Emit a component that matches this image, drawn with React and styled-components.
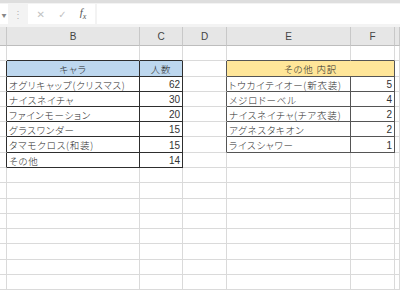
import React from "react";
import styled, { createGlobalStyle } from "styled-components";

const GlobalStyle = createGlobalStyle`
  body {
    margin: 0;
    background: #fff;
    font-family: "Noto Sans CJK JP", sans-serif;
    overflow: hidden;
  }
`;

const Window = styled.div`
  width: 400px;
  height: 290px;
  overflow: hidden;
  display: flex;
  flex-direction: column;
  background: #fff;
`;

const FormulaBar = styled.div`
  height: 27px;
  flex-shrink: 0;
  box-sizing: border-box;
  border-top: 3px solid #dedede;
  background: #f3f3f3;
  padding-top: 1px;
  display: flex;
  align-items: flex-start;
`;

const NameBox = styled.div`
  width: 8px;
  height: 20px;
  background: #fff;
  display: flex;
  align-items: center;
  justify-content: center;
  color: #888;
  font-size: 5px;
`;

const Dots = styled.div`
  width: 20px;
  height: 20px;
  display: flex;
  align-items: center;
  justify-content: center;
  color: #b5b5b5;
  font-family: "Liberation Sans", sans-serif;
  font-size: 10px;
`;

const FnBox = styled.div`
  width: 67px;
  height: 20px;
  box-sizing: border-box;
  background: #fff;
  display: flex;
  align-items: center;
  justify-content: space-around;
  padding: 0 2px;
`;

const FnIcon = styled.span`
  color: ${(p) => (p.$dim ? "#c2c2c2" : "#555")};
  font-family: ${(p) => (p.$fx ? '"Liberation Serif", serif' : '"DejaVu Sans", sans-serif')};
  font-style: ${(p) => (p.$fx ? "italic" : "normal")};
  font-size: ${(p) => (p.$fx ? "11px" : "10px")};
`;

const Input = styled.div`
  flex: 1;
  height: 20px;
  margin-left: 2px;
  background: #fff;
`;

const Sheet = styled.div`
  display: grid;
  grid-template-columns: 7px 133px 43px 44px 124px 44px 1fr;
`;

const ColHead = styled.div`
  height: 19px;
  box-sizing: border-box;
  background: #e6e6e6;
  border-right: 1px solid #c8c8c8;
  border-bottom: 1px solid #bdbdbd;
  display: flex;
  align-items: center;
  justify-content: center;
  color: #444;
  font-family: "Liberation Sans", sans-serif;
  font-size: 10px;
`;

const Cell = styled.div`
  height: ${(p) => p.$h}px;
  box-sizing: border-box;
  grid-column: span ${(p) => p.$span || 1};
  background: ${(p) => p.$bg || "#fff"};
  border-right: 1px solid ${(p) => p.$right || "#dadada"};
  border-bottom: 1px solid ${(p) => p.$bottom || "#dadada"};
  display: flex;
  align-items: center;
  justify-content: ${(p) =>
    p.$align === "center" ? "center" : p.$align === "right" ? "flex-end" : "flex-start"};
  padding: 1px 2px 0 2px;
  color: #2a2a2a;
  font-size: 9.5px;
  font-weight: 300;
  font-feature-settings: "palt";
  letter-spacing: 0.8px;
  white-space: nowrap;
`;

const Num = styled.span`
  font-family: "Liberation Sans", sans-serif;
  font-size: 10px;
  font-weight: 400;
  color: #333;
  letter-spacing: 0;
`;

const HEIGHTS = [15, 16, 15, 15, 15, 15, 16, 15, 15, 16, 15, 15, 15, 16, 15, 15];
const LETTERS = ["", "B", "C", "D", "E", "F", ""];

const DARK1 = "#2e2e2e";
const DARK2 = "#555";

const chara = [
  ["オグリキャップ(クリスマス)", 62],
  ["ナイスネイチャ", 30],
  ["ファインモーション", 20],
  ["グラスワンダー", 15],
  ["タマモクロス(和装)", 15],
  ["その他", 14],
];

const others = [
  ["トウカイテイオー(新衣装)", 5],
  ["メジロドーベル", 4],
  ["ナイスネイチャ(チア衣装)", 2],
  ["アグネスタキオン", 2],
  ["ライスシャワー", 1],
];

function buildRow(r) {
  // r: 1-based row number
  const cells = [];
  const inT1 = r >= 2 && r <= 8;
  const inT2 = r >= 2 && r <= 7;
  const above = r === 1;

  cells.push({ right: inT1 ? DARK1 : null });

  // B, C
  if (r === 2) {
    cells.push({ text: "キャラ", align: "center", bg: "#bdd7ee", right: DARK1, bottom: DARK1 });
    cells.push({ text: "人数", align: "center", bg: "#bdd7ee", right: DARK1, bottom: DARK1 });
  } else if (inT1) {
    const [name, n] = chara[r - 3];
    cells.push({ text: name, right: DARK1, bottom: DARK1 });
    cells.push({ num: n, align: "right", right: DARK1, bottom: DARK1 });
  } else {
    cells.push({ bottom: above ? DARK1 : null });
    cells.push({ bottom: above ? DARK1 : null });
  }

  // D
  cells.push({ right: inT2 ? DARK2 : null });

  // E, F
  if (r === 2) {
    cells.push({ text: "その他 内訳", align: "center", bg: "#ffe699", span: 2, right: DARK2, bottom: DARK2 });
  } else if (inT2) {
    const [name, n] = others[r - 3];
    cells.push({ text: name, right: DARK2, bottom: DARK2 });
    cells.push({ num: n, align: "right", right: DARK2, bottom: DARK2 });
  } else {
    cells.push({ bottom: above ? DARK2 : null });
    cells.push({ bottom: above ? DARK2 : null });
  }

  cells.push({});
  return cells;
}

const App = () => {
  return (
    <Window>
      <GlobalStyle />
      <FormulaBar>
        <NameBox>▼</NameBox>
        <Dots>⋮</Dots>
        <FnBox>
          <FnIcon $dim>✕</FnIcon>
          <FnIcon $dim>✓</FnIcon>
          <FnIcon $fx>
            f<sub style={{ fontSize: "8px" }}>x</sub>
          </FnIcon>
        </FnBox>
        <Input />
      </FormulaBar>
      <Sheet>
        {LETTERS.map((l, i) => (
          <ColHead key={"h" + i}>{l}</ColHead>
        ))}
        {HEIGHTS.map((h, ri) =>
          buildRow(ri + 1).map((c, ci) => (
            <Cell
              key={ri + "-" + ci}
              $h={h}
              $span={c.span}
              $bg={c.bg}
              $right={c.right}
              $bottom={c.bottom}
              $align={c.align}
            >
              {c.text}
              {c.num !== undefined && <Num>{c.num}</Num>}
            </Cell>
          ))
        )}
      </Sheet>
    </Window>
  );
};

export default App;
